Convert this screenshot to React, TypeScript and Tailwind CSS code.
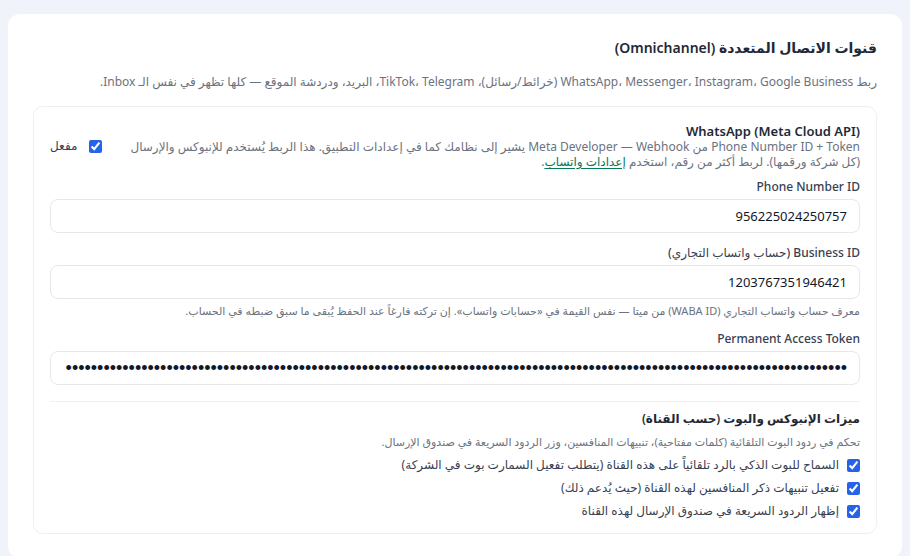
import React from "react";

const font = { fontFamily: '"Noto Sans", "DejaVu Sans", sans-serif' };

function Field({
  label,
  value,
  secret = false,
  className = "",
}: {
  label: string;
  value: string;
  secret?: boolean;
  className?: string;
}) {
  return (
    <div className={className}>
      <label className="block text-[12px] leading-4 font-medium text-[#374151]">{label}</label>
      <input
        type="text"
        readOnly
        value={value}
        dir="rtl"
        className={
          secret
            ? "mt-1 block h-[34px] w-full rounded-lg border border-[#e5e7eb] bg-white px-3 text-right text-[18px] text-[#111827] outline-none"
            : "mt-1 block h-[34px] w-full rounded-lg border border-[#e5e7eb] bg-white px-3 text-right text-[13px] text-[#111827] outline-none"
        }
        style={secret ? { fontFamily: '"Liberation Sans", Arial, sans-serif' } : font}
      />
    </div>
  );
}

function CheckRow({ text }: { text: string }) {
  return (
    <label className="flex h-5 items-center gap-2 text-[12px] text-[#374151]">
      <input type="checkbox" defaultChecked className="h-[13px] w-[13px] shrink-0 accent-[#2563eb]" />
      <span>{text}</span>
    </label>
  );
}

export default function App() {
  return (
    <div dir="rtl" className="min-h-[556px] bg-[#f0f3f9] px-2 pt-[14px]" style={font}>
      <div className="rounded-xl bg-white px-[25px] pt-6 pb-6">
        <h2 className="text-[14px] leading-5 font-semibold text-[#1f2937]">
          قنوات الاتصال المتعددة (Omnichannel)
        </h2>
        <p className="mt-[14px] text-[12px] leading-5 text-[#6b7280]">
          ربط WhatsApp، Messenger، Instagram، Google Business (خرائط/رسائل)، TikTok، Telegram، البريد، ودردشة الموقع — كلها تظهر في نفس الـ Inbox.
        </p>

        <div className="mt-[14px] rounded-[10px] border border-[#eef0f3] bg-white px-4 pt-4 pb-3">
          {/* channel header */}
          <div className="flex items-center gap-4">
            <div className="flex-1">
              <div className="text-[13px] leading-4 font-semibold text-[#1f2937]">WhatsApp (Meta Cloud API)</div>
              <p className="text-[12px] leading-[15px] text-[#6b7280]">
                Phone Number ID + Token من Meta Developer — Webhook يشير إلى نظامك كما في إعدادات التطبيق. هذا الربط يُستخدم للإنبوكس والإرسال (كل شركة ورقمها). لربط أكثر من رقم، استخدم{" "}
                <a className="text-[#047857] underline underline-offset-2">إعدادات واتساب</a>.
              </p>
            </div>
            <label className="flex shrink-0 items-center gap-3 text-[12px] text-[#374151]">
              <input type="checkbox" defaultChecked className="h-[13px] w-[13px] accent-[#2563eb]" />
              <span>مفعل</span>
            </label>
          </div>

          <Field className="mt-[10px]" label="Phone Number ID" value="956225024250757" />
          <Field className="mt-3" label="Business ID (حساب واتساب التجاري)" value="1203767351946421" />
          <p className="mt-1 text-[11px] leading-4 text-[#6b7280]">
            معرف حساب واتساب التجاري (WABA ID) من ميتا — نفس القيمة في «حسابات واتساب». إن تركته فارغاً عند الحفظ يُبقى ما سبق ضبطه في الحساب.
          </p>
          <Field
            className="mt-3"
            label="Permanent Access Token"
            secret
            value={"•".repeat(124)}
          />

          {/* inbox & bot features */}
          <div className="mt-4 border-t border-[#f0f1f4] pt-[9px]">
            <div className="text-[12px] leading-4 font-semibold text-[#1f2937]">ميزات الإنبوكس والبوت (حسب القناة)</div>
            <p className="mt-[7px] text-[11px] leading-4 text-[#6b7280]">
              تحكم في ردود البوت التلقائية (كلمات مفتاحية)، تنبيهات المنافسين، وزر الردود السريعة في صندوق الإرسال.
            </p>
            <div className="mt-[5px] flex flex-col gap-[3px]">
              <CheckRow text="السماح للبوت الذكي بالرد تلقائياً على هذه القناة (يتطلب تفعيل السمارت بوت في الشركة)" />
              <CheckRow text="تفعيل تنبيهات ذكر المنافسين لهذه القناة (حيث يُدعم ذلك)" />
              <CheckRow text="إظهار الردود السريعة في صندوق الإرسال لهذه القناة" />
            </div>
          </div>
        </div>
      </div>
    </div>
  );
}
